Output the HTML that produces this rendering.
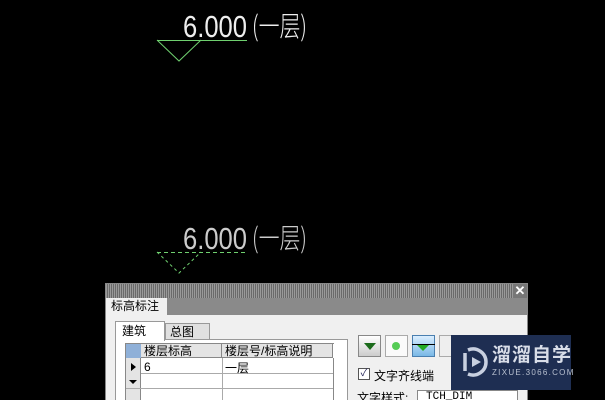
<!DOCTYPE html><html><head><meta charset="utf-8"><style>
*{margin:0;padding:0;box-sizing:border-box}
html,body{width:605px;height:400px;overflow:hidden}
body{background:#000;position:relative;font-family:"Liberation Sans","Noto Sans CJK SC",sans-serif}
.a{position:absolute}
.t{font-size:12px;color:#000}
</style></head><body>
<svg class="a" style="left:0;top:0" width="605" height="400">
<line x1="157" y1="40.5" x2="247" y2="40.5" stroke="#6fd06f"/>
<polyline points="157,40 179,61 201,40" fill="none" stroke="#6fd06f"/>
<line x1="157" y1="252.5" x2="247" y2="252.5" stroke="#6fd06f" stroke-dasharray="4,3"/>
<polyline points="157,252 179,273 201,252" fill="none" stroke="#6fd06f" stroke-dasharray="3,3"/>
<text x="183" y="37" fill="#eee" font-size="31" font-family="Liberation Sans Narrow,Liberation Sans" textLength="64" lengthAdjust="spacingAndGlyphs">6.000</text>
<text x="252" y="36" fill="#eee" font-size="28" font-family="Noto Sans CJK SC" font-weight="300" textLength="55" lengthAdjust="spacingAndGlyphs">(一层)</text>
<text x="183" y="249" fill="#ccc" font-size="31" font-family="Liberation Sans Narrow,Liberation Sans" textLength="64" lengthAdjust="spacingAndGlyphs">6.000</text>
<text x="252" y="248" fill="#ccc" font-size="28" font-family="Noto Sans CJK SC" font-weight="300" textLength="55" lengthAdjust="spacingAndGlyphs">(一层)</text>
</svg>
<div class="a" style="left:105px;top:283px;width:423px;height:117px;background:#f0f0f0;border:1px solid #888;border-bottom:none"></div>
<div class="a" style="left:106px;top:284px;width:421px;height:14px;background:repeating-linear-gradient(90deg,#9a9a9a 0 1px,#6a6a6a 1px 2px)"></div>
<div class="a" style="left:513px;top:284px;width:14px;height:14px;background:#777;color:#fff;font-size:13px;font-weight:bold;text-align:center;line-height:14px">✕</div>
<div class="a" style="left:106px;top:298px;width:421px;height:17px;background:#8a8a8a"></div>
<div class="a t" style="left:106px;top:298px;width:61px;height:17px;background:#f0f0f0;padding-left:5px;line-height:17px">标高标注</div>
<div class="a" style="left:115px;top:339px;width:233px;height:61px;background:#fff;border:1px solid #999;border-bottom:none"></div>
<div class="a t" style="left:115px;top:321px;width:50px;height:20px;background:#fff;border:1px solid #999;border-bottom:none;padding-left:6px;line-height:18px">建筑</div>
<div class="a t" style="left:165px;top:323px;width:45px;height:17px;background:#e0e0e0;border:1px solid #999;padding-left:4px;line-height:16px">总图</div>
<div class="a" style="left:125px;top:343px;width:209px;height:57px;background:#fff;border-left:1px solid #888;border-top:1px solid #888"></div>
<div class="a" style="left:126px;top:344px;width:15px;height:14px;background:#8fb0d8"></div>
<div class="a t" style="left:141px;top:344px;width:81px;height:14px;background:#e4e4e4;border-right:1px solid #888;border-bottom:1px solid #888;line-height:14px;padding-left:3px">楼层标高</div>
<div class="a t" style="left:222px;top:344px;width:111px;height:14px;background:#e4e4e4;border-right:1px solid #888;border-bottom:1px solid #888;line-height:14px;padding-left:3px">楼层号/标高说明</div>
<div class="a" style="left:126px;top:358px;width:15px;height:42px;background:#e4e4e4;border-right:1px solid #888"></div>
<div class="a" style="left:131px;top:363px;width:0;height:0;border-left:5px solid #000;border-top:4px solid transparent;border-bottom:4px solid transparent"></div>
<div class="a" style="left:129px;top:380px;width:0;height:0;border-top:4px solid #000;border-left:4px solid transparent;border-right:4px solid transparent"></div>
<div class="a" style="left:141px;top:373px;width:192px;height:1px;background:#aaa"></div>
<div class="a" style="left:126px;top:388px;width:207px;height:1px;background:#aaa"></div>
<div class="a" style="left:222px;top:358px;width:1px;height:42px;background:#aaa"></div>
<div class="a" style="left:333px;top:358px;width:1px;height:42px;background:#888"></div>
<div class="a t" style="left:144px;top:360px">6</div>
<div class="a t" style="left:225px;top:359px">一层</div>
<div class="a" style="left:358px;top:335px;width:23px;height:22px;border:1px solid #888;background:linear-gradient(#fff,#ccc)"></div>
<div class="a" style="left:364px;top:343px;border-top:7px solid #1a6a1a;border-left:6px solid transparent;border-right:6px solid transparent"></div>
<div class="a" style="left:385px;top:335px;width:23px;height:22px;border:1px solid #aaa;background:#fafafa"></div>
<div class="a" style="left:392px;top:342px;width:8px;height:8px;border-radius:50%;background:#5c5"></div>
<div class="a" style="left:412px;top:335px;width:23px;height:22px;border:1px solid #4a7fb0;background:linear-gradient(#dbeeff,#7ab8e6)"></div>
<div class="a" style="left:412px;top:344px;width:23px;height:1px;background:#000"></div>
<div class="a" style="left:417px;top:345px;border-top:6px solid #2a2;border-left:6px solid transparent;border-right:6px solid transparent"></div>
<div class="a" style="left:439px;top:335px;width:23px;height:22px;border:1px solid #aaa;background:#eee"></div>
<div class="a" style="left:358px;top:368px;width:12px;height:12px;border:1px solid #555;background:#fff;font-size:10px;line-height:10px;color:#225;text-align:center">✓</div>
<div class="a t" style="left:374px;top:367px">文字齐线端</div>
<div class="a t" style="left:357px;top:389px">文字样式:</div>
<div class="a" style="left:417px;top:390px;width:101px;height:10px;border:1px solid #888;border-bottom:none;background:#fff;font-size:11px;padding-left:8px;font-family:'Liberation Mono';line-height:12px;overflow:hidden">TCH_DIM</div>
<div class="a" style="left:451px;top:335px;width:120px;height:55px;background:#1e2e52"></div>
<svg class="a" style="left:458px;top:345px" width="34" height="34"><path d="M10 5 A13 13 0 1 1 10 29" fill="none" stroke="#c8d0e0" stroke-width="3.5"/><path d="M7 8 V26" stroke="#c8d0e0" stroke-width="3.5"/><path d="M14 12 L23 17 L14 22Z" fill="#c8d0e0"/></svg>
<div class="a" style="left:492px;top:343px;color:#d8dde8;font-size:19px;font-weight:bold;letter-spacing:1px;font-family:'Noto Sans CJK SC',sans-serif;line-height:22px">溜溜自学</div>
<div class="a" style="left:492px;top:368px;color:#b8c0d0;font-size:8px;letter-spacing:1.3px">ZIXUE.3066.COM</div>
</body></html>
